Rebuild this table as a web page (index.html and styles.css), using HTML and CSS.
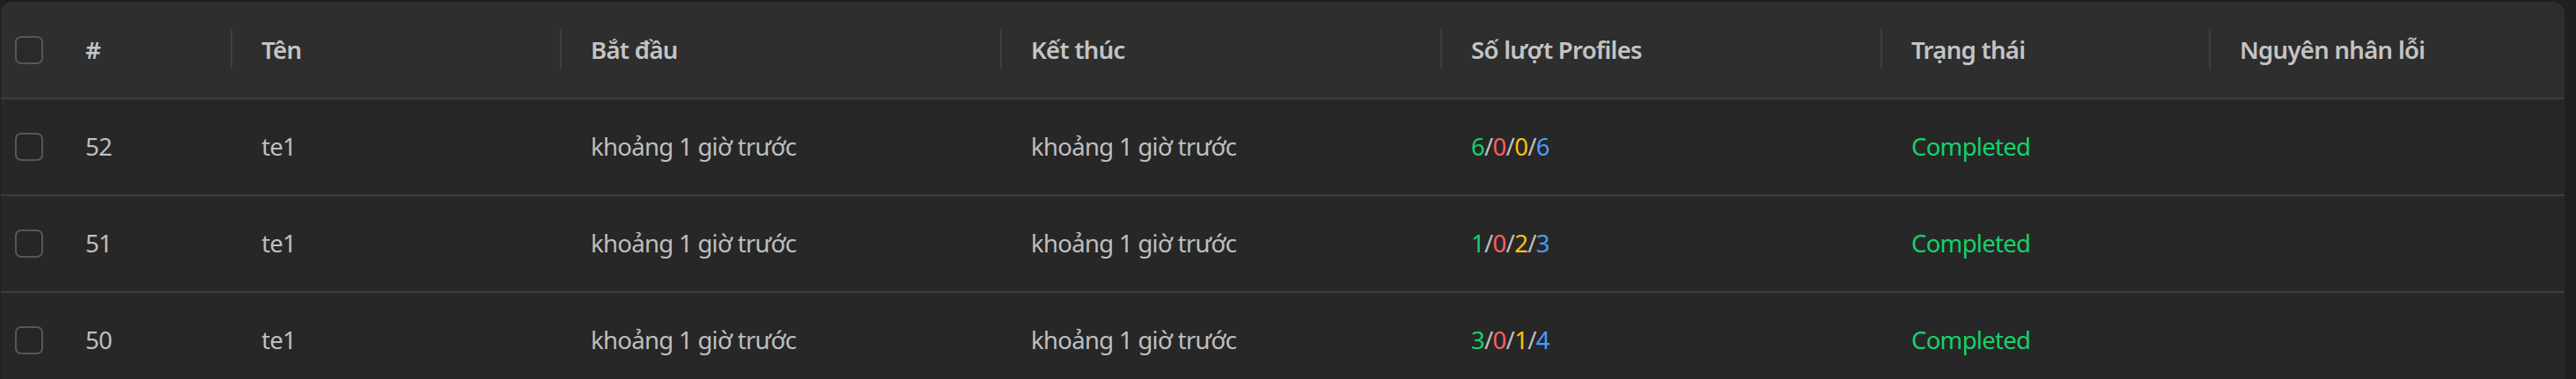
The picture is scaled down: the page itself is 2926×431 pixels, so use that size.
FILE: index.html
```html
<!DOCTYPE html>
<html lang="vi">
<head>
<meta charset="utf-8">
<title>Runs</title>
<link rel="stylesheet" href="styles.css">
</head>
<body>
<div class="card">
  <table class="runs">
    <colgroup>
      <col class="c-sel"><col class="c-id"><col class="c-name"><col class="c-start"><col class="c-end"><col class="c-count"><col class="c-status"><col class="c-err">
    </colgroup>
    <thead>
      <tr>
        <th class="sel"><span class="cb"></span></th>
        <th class="div">#</th>
        <th class="div">Tên</th>
        <th class="div">Bắt đầu</th>
        <th class="div">Kết thúc</th>
        <th class="div">Số lượt Profiles</th>
        <th class="div">Trạng thái</th>
        <th>Nguyên nhân lỗi</th>
      </tr>
    </thead>
    <tbody>
      <tr>
        <td class="sel"><span class="cb"></span></td>
        <td>52</td>
        <td>te1</td>
        <td>khoảng 1 giờ trước</td>
        <td>khoảng 1 giờ trước</td>
        <td><span class="ok">6</span>/<span class="fail">0</span>/<span class="pend">0</span>/<span class="total">6</span></td>
        <td class="done">Completed</td>
        <td></td>
      </tr>
      <tr>
        <td class="sel"><span class="cb"></span></td>
        <td>51</td>
        <td>te1</td>
        <td>khoảng 1 giờ trước</td>
        <td>khoảng 1 giờ trước</td>
        <td><span class="ok">1</span>/<span class="fail">0</span>/<span class="pend">2</span>/<span class="total">3</span></td>
        <td class="done">Completed</td>
        <td></td>
      </tr>
      <tr>
        <td class="sel"><span class="cb"></span></td>
        <td>50</td>
        <td>te1</td>
        <td>khoảng 1 giờ trước</td>
        <td>khoảng 1 giờ trước</td>
        <td><span class="ok">3</span>/<span class="fail">0</span>/<span class="pend">1</span>/<span class="total">4</span></td>
        <td class="done">Completed</td>
        <td></td>
      </tr>
    </tbody>
  </table>
</div>
</body>
</html>
```
FILE: styles.css
```css
html, body {
  margin: 0;
  padding: 0;
  background: #1f1f1f;
  overflow: hidden;
}
body {
  padding: 2px 13px 0 1px;
  font-family: "Noto Sans", "Open Sans", sans-serif;
  font-size: 27.5px;
  letter-spacing: -0.7px;
  color: #bfbfbf;
}
.card {
  width: 2912px;
  background: #272727;
  border-radius: 13px 13px 0 0;
  overflow: hidden;
}
.runs {
  width: 100%;
  border-collapse: collapse;
  table-layout: fixed;
}
.c-sel { width: 63px; }
.c-id { width: 200px; }
.c-name { width: 374px; }
.c-start { width: 500px; }
.c-end { width: 500px; }
.c-count { width: 500px; }
.c-status { width: 373px; }
.c-err { width: 402px; }

th, td {
  text-align: left;
  padding: 0 0 0 33px;
  white-space: nowrap;
  line-height: 32px;
}
thead tr {
  height: 110px;
  background: #2e2e2e;
  border-bottom: 2px solid #3e3e3e;
}
th {
  font-weight: 600;
  color: #c4c4c4;
  position: relative;
}
th.div::after {
  content: "";
  position: absolute;
  right: 0;
  top: 31px;
  width: 2px;
  height: 45px;
  background: #3f3f3f;
}
tbody tr {
  height: 110px;
  border-bottom: 2px solid #3e3e3e;
}
th.sel, td.sel {
  padding: 0 0 0 16px;
}
.cb {
  display: block;
  width: 28px;
  height: 28px;
  border: 2px solid #575757;
  border-radius: 7px;
  background: #262626;
}
thead .cb { background: #2a2a2a; }
.ok { color: #13d26a; }
.fail { color: #ff5f5f; }
.pend { color: #fcc10c; }
.total { color: #4a9cff; }
.done { color: #13d26a; }
```
